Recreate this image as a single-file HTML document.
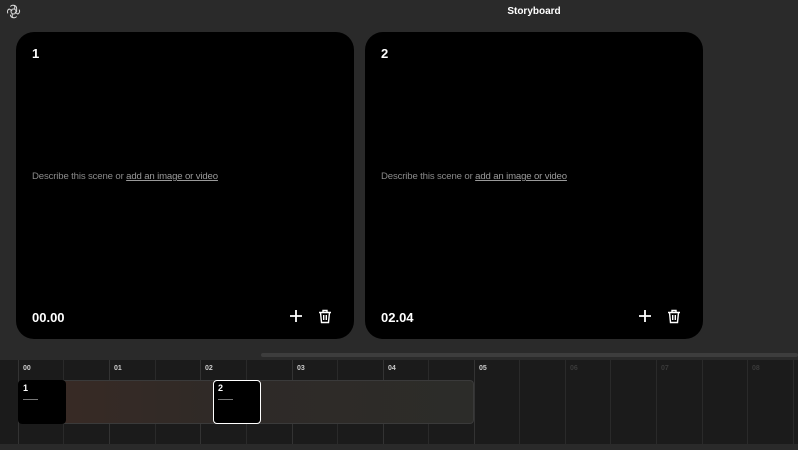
<!DOCTYPE html>
<html><head><style>
*{margin:0;padding:0;box-sizing:border-box}
body{width:798px;height:450px;background:#2a2a2a;font-family:"Liberation Sans",sans-serif;position:relative;overflow:hidden;color:#fff}
.title{position:absolute;left:0;width:1068px;top:6px;text-align:center;font-size:10px;font-weight:bold}
.card{position:absolute;top:32px;width:338px;height:307px;background:#000;border-radius:18px}
.num{position:absolute;left:16px;top:14px;font-size:13px;font-weight:bold}
.desc{position:absolute;left:16px;top:139px;font-size:9.6px;color:#8a8a8a;letter-spacing:-0.15px}
.desc u{color:#9a9a9a}
.time{position:absolute;left:16px;top:278px;font-size:13px;font-weight:bold}
.plus{position:absolute;left:273px;top:277px}
.trash{position:absolute;left:302px;top:277px}
.scroll{position:absolute;left:261px;top:353px;width:537px;height:4px;background:#3d3d3d;border-radius:2px}
.tl{position:absolute;left:0;top:360px;width:798px;height:84px;background:#1b1b1b}
.g{position:absolute;top:0;height:84px;width:1px;background:#2a2a2a}
.lb{position:absolute;top:5px;font-size:7px;color:#ccc;font-weight:bold}
.bar{position:absolute;left:18px;top:20px;width:456px;height:44px;border-radius:4px;border:1px solid #3a3a3a;background:linear-gradient(90deg,#3a2a24,#2f2a27 45%,#2c2c29)}
.clip{position:absolute;top:20px;width:48px;height:44px;background:#000;border-radius:4px}
.clip b{position:absolute;left:5px;top:3px;font-size:9px}
.clip i{position:absolute;left:5px;top:19px;width:15px;height:1px;background:#777}
</style></head><body>
<svg style="position:absolute;left:6px;top:4px" width="15" height="15" viewBox="0 0 24 24" fill="none" stroke="#ddd" stroke-width="1.6"><circle cx="12" cy="12" r="4"/><path d="M12 2a5 5 0 0 1 5 5v6M21 9a5 5 0 0 1-2 7l-5-3M17 20a5 5 0 0 1-7 1v-6M3 15a5 5 0 0 1 2-7l5 3M7 4a5 5 0 0 1 7-1v6M12 22a5 5 0 0 1-5-5"/></svg>
<div class="title">Storyboard</div>
<div class="card" style="left:16px"><div class="num">1</div><div class="desc">Describe this scene or <u>add an image or video</u></div><div class="time">00.00</div>
<svg class="plus" width="14" height="14" viewBox="0 0 14 14" stroke="#fff" stroke-width="1.8"><path d="M7 1v12M1 7h12"/></svg>
<svg class="trash" width="14" height="15" viewBox="0 0 14 15" fill="none" stroke="#fff" stroke-width="1.4"><path d="M1 3.5h12M5 3.5V1.5h4v2M2.5 3.5l1 10h7l1-10M5.7 6v5M8.3 6v5"/></svg></div>
<div class="card" style="left:365px"><div class="num">2</div><div class="desc">Describe this scene or <u>add an image or video</u></div><div class="time">02.04</div>
<svg class="plus" width="14" height="14" viewBox="0 0 14 14" stroke="#fff" stroke-width="1.8"><path d="M7 1v12M1 7h12"/></svg>
<svg class="trash" width="14" height="15" viewBox="0 0 14 15" fill="none" stroke="#fff" stroke-width="1.4"><path d="M1 3.5h12M5 3.5V1.5h4v2M2.5 3.5l1 10h7l1-10M5.7 6v5M8.3 6v5"/></svg></div>
<div class="scroll"></div>
<div class="tl">
<div class="g" style="left:18px;background:#333"></div><div class="g" style="left:63px"></div><div class="g" style="left:109px;background:#333"></div><div class="g" style="left:155px"></div><div class="g" style="left:200px;background:#333"></div><div class="g" style="left:246px"></div><div class="g" style="left:292px;background:#333"></div><div class="g" style="left:337px"></div><div class="g" style="left:383px;background:#333"></div><div class="g" style="left:428px"></div><div class="g" style="left:474px;background:#333"></div><div class="g" style="left:519px"></div><div class="g" style="left:565px"></div><div class="g" style="left:610px"></div><div class="g" style="left:656px"></div><div class="g" style="left:702px"></div><div class="g" style="left:747px"></div><div class="g" style="left:793px"></div>
<div class="lb" style="left:23px">00</div><div class="lb" style="left:114px">01</div><div class="lb" style="left:205px">02</div><div class="lb" style="left:297px">03</div><div class="lb" style="left:388px">04</div><div class="lb" style="left:479px">05</div>
<div class="lb" style="left:570px;color:#3a3a3a">06</div><div class="lb" style="left:661px;color:#3a3a3a">07</div><div class="lb" style="left:752px;color:#3a3a3a">08</div>
<div class="bar"></div>
<div class="clip" style="left:18px"><b>1</b><i></i></div>
<div class="clip" style="left:213px;border:1.5px solid #fff"><b style="left:4px;top:2px">2</b><i style="left:4px;top:18px"></i></div>
</div>
</body></html>
